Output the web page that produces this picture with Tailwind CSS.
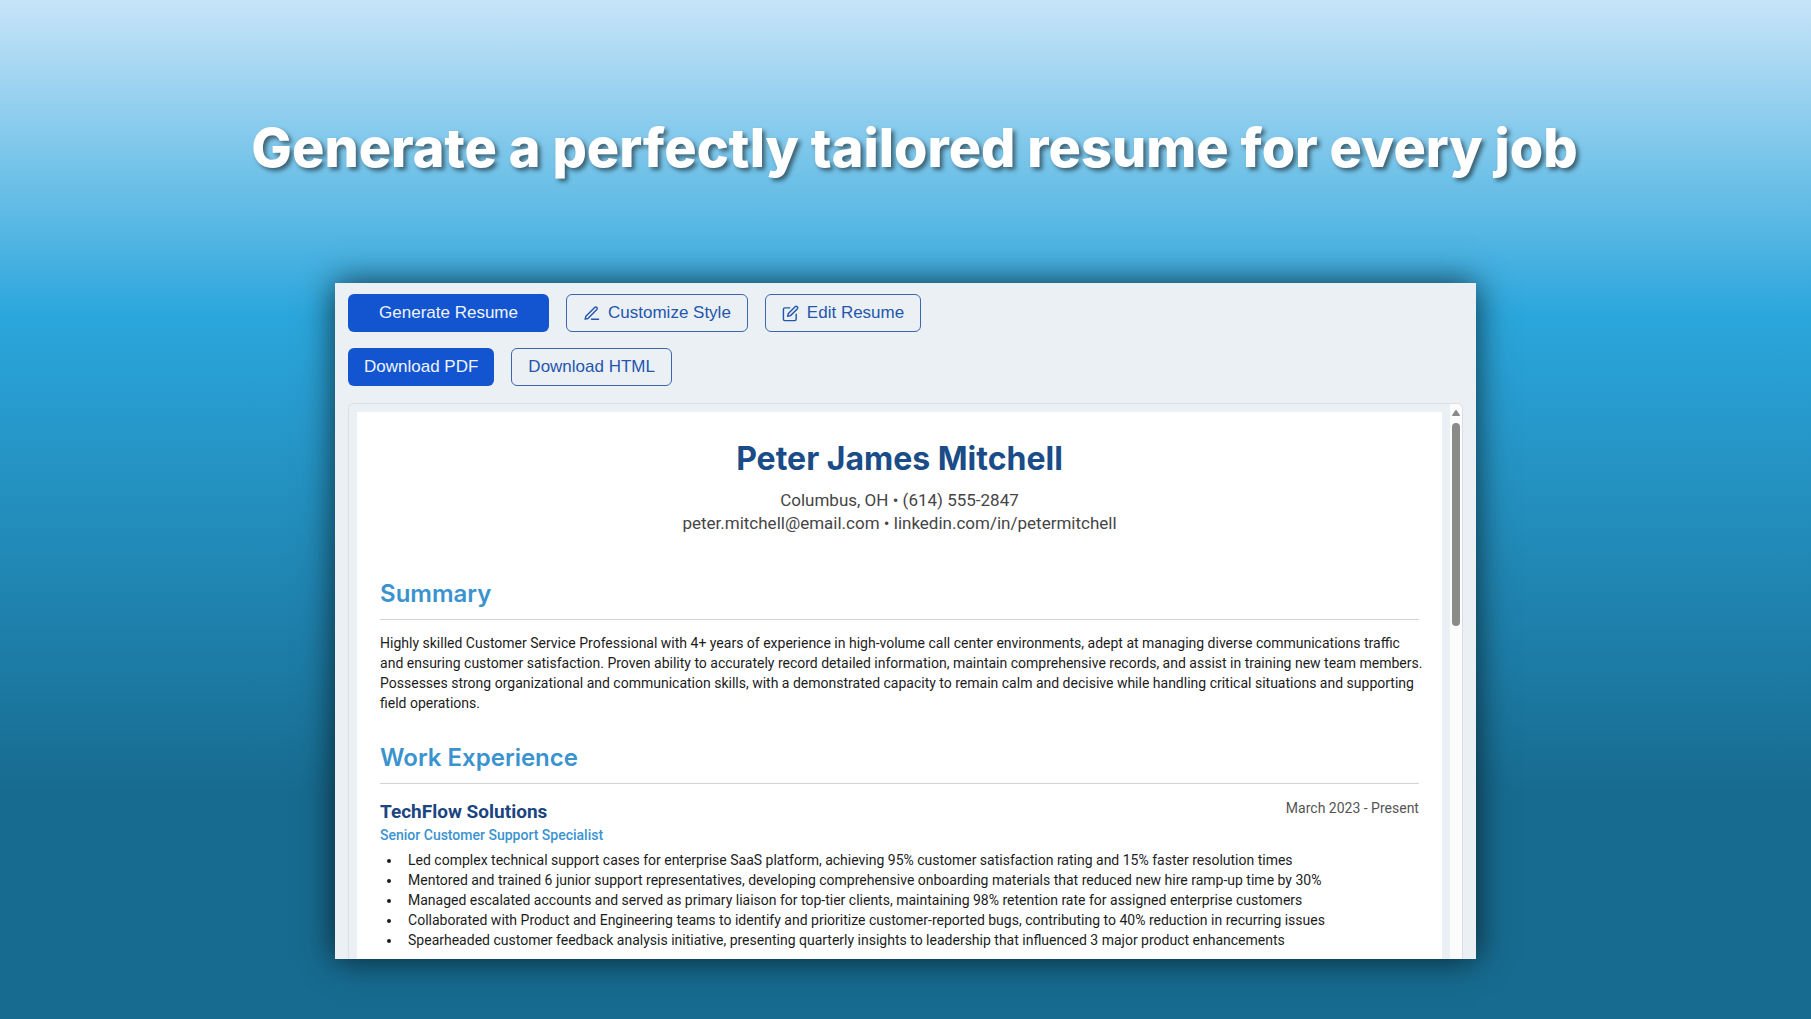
<!DOCTYPE html>
<html lang="en">
<head>
    <meta charset="UTF-8">
    <meta name="viewport" content="width=device-width, initial-scale=1.0">
    <title>Resume Generator</title>
    <script src="https://cdn.jsdelivr.net/npm/@tailwindcss/browser@4"></script>
</head>
<body>
    <div class="h-screen flex flex-col items-center overflow-hidden pb-[60px] bg-[linear-gradient(to_bottom,#c7e4f8_0%,#2ba6dc_31%,#176b90_78%,#176b90_100%)]">
        <!-- Headline -->
        <header class="h-[283px] shrink-0 pt-[112px] pl-[18px]">
            <h1 class="font-['Inter',sans-serif] font-extrabold text-[54px] leading-[72px] text-white whitespace-nowrap [text-shadow:3px_3px_4px_rgba(0,0,0,0.5)]">Generate a perfectly tailored resume for every job</h1>
        </header>

        <!-- App Window -->
        <main class="w-[63%] flex-1 min-h-0 flex flex-col bg-[#ebf0f4] shadow-[0_0_32px_0_rgba(0,0,0,0.7)] px-[13px] pt-[11px]">
            <div class="flex flex-col gap-4 font-['Liberation_Sans',sans-serif] text-[17px]">
                <div class="flex gap-[17px]">
                    <button id="generateResume" class="h-[38px] w-[201px] rounded-md bg-[#1354d0] text-[#eef4fc]">Generate Resume</button>
                    <button id="customizeStyle" class="h-[38px] px-4 flex items-center gap-2 rounded-md border border-[#3c66b0] text-[#2456ae]">
                        <svg xmlns="http://www.w3.org/2000/svg" width="17" height="17" viewBox="0 0 24 24" fill="none" stroke="currentColor" stroke-width="2" stroke-linecap="round" stroke-linejoin="round">
                            <path d="M12 20h10"/>
                            <path d="M16.5 3.5a2.12 2.12 0 0 1 3 3L7 19l-4 1 1-4Z"/>
                        </svg>
                        Customize Style
                    </button>
                    <button id="editResume" class="h-[38px] px-4 flex items-center gap-2 rounded-md border border-[#3c66b0] text-[#2456ae]">
                        <svg xmlns="http://www.w3.org/2000/svg" width="17" height="17" viewBox="0 0 24 24" fill="none" stroke="currentColor" stroke-width="2" stroke-linecap="round" stroke-linejoin="round">
                            <path d="M11 4H4a2 2 0 0 0-2 2v14a2 2 0 0 0 2 2h14a2 2 0 0 0 2-2v-7"/>
                            <path d="M18.5 2.5a2.12 2.12 0 0 1 3 3L12 15l-4 1 1-4Z"/>
                        </svg>
                        Edit Resume
                    </button>
                </div>
                <div class="flex gap-[17px]">
                    <button id="downloadPdf" class="h-[38px] px-4 rounded-md bg-[#1354d0] text-[#eef4fc]">Download PDF</button>
                    <button id="downloadHtml" class="h-[38px] px-4 rounded-md border border-[#3c66b0] text-[#2456ae]">Download HTML</button>
                </div>
            </div>

            <!-- Resume Preview -->
            <div class="mt-[17px] flex-1 min-h-0 flex overflow-hidden rounded-t-md border border-b-0 border-[#dbdfe4]">
                <div class="flex-1 min-w-0 px-2 pt-2 bg-[#ebf0f4]">
                    <article class="h-full bg-white px-[23px] pt-[23px] font-['Roboto',sans-serif] text-[14px] leading-[20px] text-[#1c1c1c]">
                        <div class="text-center">
                            <h2 class="font-['Inter',sans-serif] font-bold text-[32px] leading-[48px] text-[#1a4c87]">Peter James Mitchell</h2>
                            <p class="mt-[6px] text-[17px] leading-[23px] text-[#454545]">Columbus, OH • (614) 555-2847<br>peter.mitchell@email.com • linkedin.com/in/petermitchell</p>
                        </div>

                        <section class="mt-[41px]">
                            <h3 class="pb-[7px] border-b border-[#d3d3d3] font-['Inter',sans-serif] font-semibold text-[24px] leading-[36px] text-[#3a93cf]">Summary</h3>
                            <p class="mt-[13px] -mr-1">Highly skilled Customer Service Professional with 4+ years of experience in high-volume call center environments, adept at managing diverse communications traffic and ensuring customer satisfaction. Proven ability to accurately record detailed information, maintain comprehensive records, and assist in training new team members. Possesses strong organizational and communication skills, with a demonstrated capacity to remain calm and decisive while handling critical situations and supporting field operations.</p>
                        </section>

                        <section class="mt-[27px]">
                            <h3 class="pb-[7px] border-b border-[#d3d3d3] font-['Inter',sans-serif] font-semibold text-[24px] leading-[36px] text-[#3a93cf]">Work Experience</h3>
                            <div class="mt-[14px] flex justify-between">
                                <div>
                                    <h4 class="font-bold text-[19px] leading-[28px] text-[#1a4580]">TechFlow Solutions</h4>
                                    <p class="font-medium leading-[18px] text-[#3a93cf]">Senior Customer Support Specialist</p>
                                </div>
                                <p class="text-[#555]">March 2023 - Present</p>
                            </div>
                            <ul class="mt-[6px] pl-[22px] list-disc">
                                <li class="pl-[6px]">Led complex technical support cases for enterprise SaaS platform, achieving 95% customer satisfaction rating and 15% faster resolution times</li>
                                <li class="pl-[6px]">Mentored and trained 6 junior support representatives, developing comprehensive onboarding materials that reduced new hire ramp-up time by 30%</li>
                                <li class="pl-[6px]">Managed escalated accounts and served as primary liaison for top-tier clients, maintaining 98% retention rate for assigned enterprise customers</li>
                                <li class="pl-[6px]">Collaborated with Product and Engineering teams to identify and prioritize customer-reported bugs, contributing to 40% reduction in recurring issues</li>
                                <li class="pl-[6px]">Spearheaded customer feedback analysis initiative, presenting quarterly insights to leadership that influenced 3 major product enhancements</li>
                            </ul>
                        </section>
                    </article>
                </div>
                <!-- Scrollbar -->
                <div class="w-3 shrink-0 flex flex-col items-center bg-[#fcfcfc] pt-[6px]">
                    <svg xmlns="http://www.w3.org/2000/svg" width="8" height="6" viewBox="0 0 8 6" fill="#8a8a8a">
                        <path d="M3.2.6a1 1 0 0 1 1.6 0L7.8 5a.6.6 0 0 1-.5 1H.7a.6.6 0 0 1-.5-1Z"/>
                    </svg>
                    <div class="mt-[7px] w-2 h-[203px] rounded-full bg-[#8a8c8a]"></div>
                </div>
            </div>
        </main>
    </div>
</body>
</html>
